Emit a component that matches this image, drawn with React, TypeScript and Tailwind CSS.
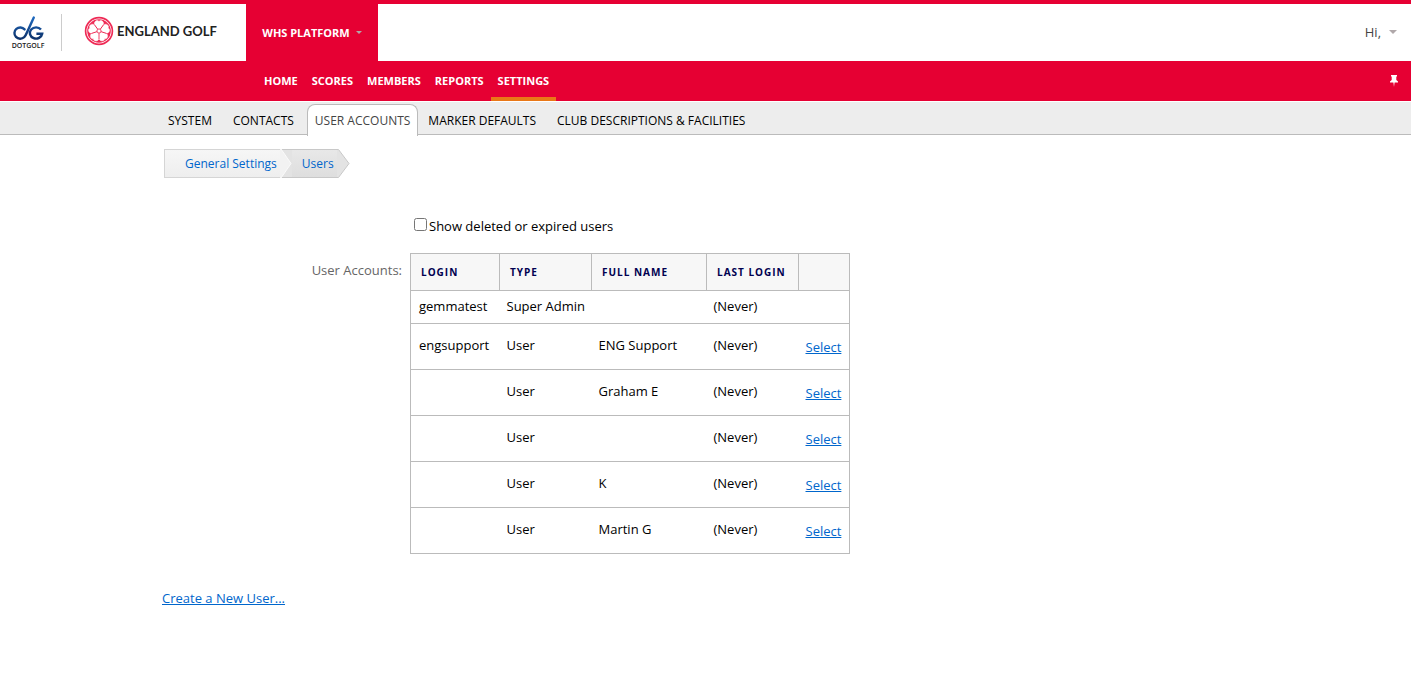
import React, { useState } from 'react';

interface UserAccount {
  login: string;
  type: string;
  fullName: string;
  lastLogin: string;
  selectable: boolean;
}

const MAIN_NAV = ['HOME', 'SCORES', 'MEMBERS', 'REPORTS', 'SETTINGS'];
const SUB_NAV = ['SYSTEM', 'CONTACTS', 'USER ACCOUNTS', 'MARKER DEFAULTS', 'CLUB DESCRIPTIONS & FACILITIES'];

const USERS: UserAccount[] = [
  { login: 'gemmatest', type: 'Super Admin', fullName: '', lastLogin: '(Never)', selectable: false },
  { login: 'engsupport', type: 'User', fullName: 'ENG Support', lastLogin: '(Never)', selectable: true },
  { login: '', type: 'User', fullName: 'Graham E', lastLogin: '(Never)', selectable: true },
  { login: '', type: 'User', fullName: '', lastLogin: '(Never)', selectable: true },
  { login: '', type: 'User', fullName: 'K', lastLogin: '(Never)', selectable: true },
  { login: '', type: 'User', fullName: 'Martin G', lastLogin: '(Never)', selectable: true },
];

const PETALS = [0, 72, 144, 216, 288];

const DotGolfLogo: React.FC = () => (
  <a href="#" className="flex w-8 flex-col items-center" aria-label="DotGolf">
    <svg width="32" height="26" viewBox="0 0 32 26" fill="none" strokeWidth="2.4">
      <defs>
        <linearGradient id="dg" x1="0" y1="0" x2="0" y2="24" gradientUnits="userSpaceOnUse">
          <stop offset="0" stopColor="#1f6cc4" />
          <stop offset="1" stopColor="#0c2f66" />
        </linearGradient>
      </defs>
      <path
        d="M12.6 13.4A5.8 5.6 0 1 0 12.2 21.2C13.8 19.6 14.4 17.8 15.4 15.4L21.8 1.6"
        stroke="url(#dg)"
        strokeLinecap="round"
      />
      <path d="M29 13.6A6.2 5.6 0 1 0 30.2 17.8H24.4" stroke="url(#dg)" />
    </svg>
    <span className="font-['Open_Sans',sans-serif] text-[7px] leading-[8px] font-semibold text-[#222]">DOTGOLF</span>
  </a>
);

const EnglandGolfLogo: React.FC = () => (
  <a href="#" className="mb-[3px] flex items-center gap-[3px]">
    <svg width="30" height="30" viewBox="0 0 30 30">
      <circle cx="15" cy="15" r="13.4" fill="#fff" stroke="#ee2a55" strokeWidth="1.7" />
      <circle cx="15" cy="15" r="11.8" fill="#ee2a55" />
      {PETALS.map((angle) => (
        <path
          key={angle}
          transform={`rotate(${angle} 15 15)`}
          d="M15 15L10.6 9C9.8 6.4 11.4 4.6 13.4 4.6C14.2 4.6 14.8 5 15 5.8C15.2 5 15.8 4.6 16.6 4.6C18.6 4.6 20.2 6.4 19.4 9Z"
          fill="#fff"
          stroke="#fff"
          strokeWidth="0.4"
        />
      ))}
      {PETALS.map((angle) => (
        <path key={angle} transform={`rotate(${angle + 36} 15 15)`} d="M15 12.8V7" stroke="#ee2a55" strokeWidth="0.9" />
      ))}
      <circle cx="15" cy="15" r="2.1" fill="#fff" stroke="#ee2a55" strokeWidth="0.9" />
    </svg>
    <span className="font-[Lato,sans-serif] text-[13px] leading-5 font-bold whitespace-nowrap text-[#222]">ENGLAND GOLF</span>
  </a>
);

const Caret: React.FC<{ small?: boolean }> = ({ small }) => (
  <svg width={small ? 6 : 8} height={small ? 3 : 4} viewBox="0 0 8 4" className="fill-[#b0a8aa]">
    <path d="M0 0H8L4 4Z" />
  </svg>
);

const Breadcrumb: React.FC = () => (
  <nav aria-label="Breadcrumb" className="ml-[2px] flex h-[29px] text-[12px] leading-[27px]">
    <a
      href="#"
      className="border-y border-l border-[#d5d5d5] bg-linear-to-b from-[#f6f6f6] to-[#eeeeee] pr-[3px] pl-5 text-[#0066cc]"
    >
      General Settings
    </a>
    <svg width="12" height="29" viewBox="0 0 12 29">
      <rect width="12" height="29" fill="#e3e3e3" />
      <path d="M0 .5H12M0 28.5H12" stroke="#c8c8c8" />
      <path d="M0 0H1L11 14.5L1 29H0Z" fill="#f2f2f2" />
      <path d="M1 0L11 14.5L1 29" fill="none" stroke="#fafafa" />
    </svg>
    <a
      href="#"
      className="border-y border-[#c8c8c8] bg-linear-to-b from-[#e8e8e8] to-[#dedede] pr-[3px] pl-[10px] text-[#0066cc]"
    >
      Users
    </a>
    <svg width="13" height="29" viewBox="0 0 13 29">
      <path d="M0 .5H1.5L12 14.5L1.5 28.5H0" fill="#e3e3e3" stroke="#c8c8c8" />
    </svg>
  </nav>
);

const App: React.FC = () => {
  const [showDeleted, setShowDeleted] = useState(false);

  return (
    <div className="min-h-screen bg-white font-['Open_Sans',sans-serif] text-[13px] leading-5 text-black">
      {/* Top bar */}
      <header className="flex h-[61px] border-t-4 border-[#e60033]">
        <div className="flex w-[246px] items-center pl-3">
          <DotGolfLogo />
          <div className="mr-[22px] ml-[17px] h-[37px] w-px bg-[#ccc]" />
          <EnglandGolfLogo />
        </div>
        <button
          type="button"
          className="flex w-[132px] items-center justify-center gap-[6px] bg-[#e60033] text-[11px] font-bold text-white"
        >
          WHS PLATFORM
          <Caret small />
        </button>
        <button type="button" className="mr-[14px] mb-[2px] ml-auto flex items-center gap-2 text-[#444]">
          Hi,
          <Caret />
        </button>
      </header>

      {/* Main navigation */}
      <nav className="flex h-10 items-stretch bg-[#e60033] pr-[13px] pl-[257px] text-[11px] font-bold text-white">
        {MAIN_NAV.map((item) => (
          <a
            key={item}
            href="#"
            className={`border-b-4 px-[7px] pt-[10px] ${item === 'SETTINGS' ? 'border-[#e97817]' : 'border-transparent'}`}
          >
            {item}
          </a>
        ))}
        <button type="button" aria-label="Pin menu" className="ml-auto">
          <svg width="8" height="12" viewBox="0 0 8 12" className="fill-white">
            <path d="M1 0H7V1.5H6.3V5L8 6.5V7.5H4.6L4 12L3.4 7.5H0V6.5L1.7 5V1.5H1Z" />
          </svg>
        </button>
      </nav>

      {/* Section tabs */}
      <nav className="mt-px flex h-[33px] items-end border-b border-[#bbb] bg-[#ededed] pl-[160px] text-[12px]">
        {SUB_NAV.map((item) => (
          <a
            key={item}
            href="#"
            className={
              item === 'USER ACCOUNTS'
                ? 'mr-[2px] -mb-[2px] h-8 rounded-t-lg border border-b-0 border-[#bbb] bg-white px-[7px] pt-[6px] text-[#444]'
                : 'mr-[5px] h-[30px] px-2 pt-[7px]'
            }
          >
            {item}
          </a>
        ))}
      </nav>

      <main className="px-[162px] pt-[14px]">
        <Breadcrumb />

        <div className="mt-[38px] grid grid-cols-[240px_1fr] gap-x-2">
          <div className="col-start-2 mb-[17px] flex items-center gap-[2px] pl-1">
            <input
              id="showDeleted"
              type="checkbox"
              checked={showDeleted}
              onChange={(e) => setShowDeleted(e.target.checked)}
              className="mb-1 size-[13px]"
            />
            <label htmlFor="showDeleted">Show deleted or expired users</label>
          </div>

          <div id="accountsLabel" className="pt-[7px] text-right text-[#666]">
            User Accounts:
          </div>
          <table
            aria-labelledby="accountsLabel"
            className="w-[440px] table-fixed border-collapse border border-[#bbb] text-left"
          >
            <colgroup>
              <col className="w-[89px]" />
              <col className="w-[92px]" />
              <col className="w-[115px]" />
              <col className="w-[92px]" />
              <col />
            </colgroup>
            <thead>
              <tr className="h-[37px] bg-[#f7f7f7] text-[10px] tracking-[1px] text-[#000050] uppercase">
                {['Login', 'Type', 'Full Name', 'Last Login', ''].map((heading) => (
                  <th key={heading} className="border border-[#bbb] pl-[10px] font-bold whitespace-nowrap">
                    {heading}
                  </th>
                ))}
              </tr>
            </thead>
            <tbody>
              {USERS.map((user, i) => (
                <tr
                  key={i}
                  className={`border-b border-[#bbb] ${user.selectable ? 'h-[46px] *:pb-1' : 'h-[33px] *:pb-[2px]'}`}
                >
                  <td className="pl-2">{user.login}</td>
                  <td className="pl-[7px]">{user.type}</td>
                  <td className="pl-[7px]">{user.fullName}</td>
                  <td className="pl-[7px]">{user.lastLogin}</td>
                  <td className="pt-1 pl-[7px]">
                    {user.selectable && (
                      <a href="#" className="text-[#0066cc] underline">
                        Select
                      </a>
                    )}
                  </td>
                </tr>
              ))}
            </tbody>
          </table>
        </div>

        <a href="#" className="mt-[34px] inline-block text-[#0066cc] underline">
          Create a New User...
        </a>
      </main>
    </div>
  );
};

export default App;
